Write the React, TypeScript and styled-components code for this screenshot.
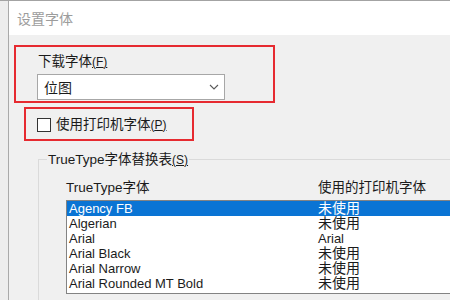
import React from "react";
import styled, { createGlobalStyle } from "styled-components";

const Global = createGlobalStyle`
  html, body { margin: 0; padding: 0; }
  body {
    width: 450px; height: 300px; overflow: hidden;
    background: #ececec;
    font-family: "Liberation Sans", "Noto Sans CJK SC", sans-serif;
    color: #1b1b1b;
  }
`;

const Frame = styled.div`
  display: flex;
  height: 299px;
  border-top: 1px solid #a3a3a3;
  overflow: hidden;
`;

const Gutter = styled.div`
  width: 8px;
  flex: none;
  background: #ededed;
`;

const Window = styled.div`
  flex: 1;
  min-width: 0;
  display: flex;
  flex-direction: column;
  border-left: 1px solid #a9a9a9;
  background: #f0f0f0;
  overflow: hidden;
`;

const TitleBar = styled.div`
  height: 34px;
  flex: none;
  background: #ffffff;
  display: flex;
  align-items: center;
  padding-left: 8px;
  font-size: 14px;
  color: #9c9c9c;
`;

const Content = styled.div`
  flex: 1;
  display: flex;
  flex-direction: column;
  align-items: flex-start;
  padding: 10px 0 0 5px;
`;

const Highlight = styled.div<{ $w: number; $h: number; $ml: number; $mt: number }>`
  box-sizing: border-box;
  width: ${(p) => p.$w}px;
  height: ${(p) => p.$h}px;
  margin-left: ${(p) => p.$ml}px;
  margin-top: ${(p) => p.$mt}px;
  border: 2px solid #e62a30;
  flex: none;
`;

const DownloadBox = styled(Highlight)`
  display: flex;
  flex-direction: column;
  padding: 7px 0 0 21px;
  gap: 4px;
`;

const Label = styled.div<{ $ml?: number }>`
  font-size: 13.5px;
  line-height: 16px;
  height: 16px;
  margin-left: ${(p) => p.$ml ?? 0}px;
  white-space: nowrap;
`;

const Key = styled.span`
  font-size: 12px;
  text-decoration: underline;
`;

const Select = styled.div`
  box-sizing: border-box;
  width: 188px;
  height: 26px;
  background: #ffffff;
  border: 1px solid #a7a7a7;
  display: flex;
  align-items: center;
  justify-content: space-between;
  padding: 0 5px 0 6px;
  font-size: 14px;
`;

const CheckBox = styled(Highlight)`
  display: flex;
  align-items: center;
  gap: 5px;
  padding: 2px 0 0 11px;
`;

const Box = styled.span`
  box-sizing: border-box;
  width: 14px;
  height: 14px;
  border: 1px solid #333333;
  background: #ffffff;
  flex: none;
`;

const Group = styled.div`
  align-self: stretch;
  margin: 18px 0 0 24px;
  border-top: 1px solid #dadada;
  border-left: 1px solid #dadada;
  flex: 1;
  display: flex;
  flex-direction: column;
`;

const Legend = styled.div`
  align-self: flex-start;
  margin: -8px 0 0 8px;
  padding: 0 1px;
  background: #f0f0f0;
  font-size: 13.5px;
  line-height: 16px;
  white-space: nowrap;
`;

const Columns = styled.div`
  display: grid;
  grid-template-columns: 252px 1fr;
  margin: 12px 0 0 27px;
  font-size: 13.5px;
  line-height: 16px;
  white-space: nowrap;
`;

const List = styled.div`
  box-sizing: border-box;
  margin: 4px 0 0 27px;
  width: 420px;
  height: 94px;
  border: 1px solid #838383;
  background: #ffffff;
  flex: none;
`;

const Row = styled.div<{ $sel?: boolean }>`
  display: grid;
  grid-template-columns: 251px 1fr;
  height: 15px;
  align-items: center;
  background: ${(p) => (p.$sel ? "#0a74d4" : "transparent")};
  color: ${(p) => (p.$sel ? "#ffffff" : "#1b1b1b")};
  white-space: nowrap;
`;

const Cell = styled.span<{ $cjk?: boolean; $pad?: number }>`
  font-size: ${(p) => (p.$cjk ? 14 : 13)}px;
  line-height: 15px;
  padding-left: ${(p) => p.$pad ?? 0}px;
`;

const rows: [string, string][] = [
  ["Agency FB", "未使用"],
  ["Algerian", "未使用"],
  ["Arial", "Arial"],
  ["Arial Black", "未使用"],
  ["Arial Narrow", "未使用"],
  ["Arial Rounded MT Bold", "未使用"],
];

const Chevron = () => (
  <svg width="10" height="6" viewBox="0 0 10 6">
    <path d="M1 1 L5 5 L9 1" fill="none" stroke="#5a5a5a" strokeWidth="1.1" />
  </svg>
);

export default function App() {
  return (
    <>
      <Global />
      <Frame>
        <Gutter />
        <Window>
          <TitleBar>设置字体</TitleBar>
          <Content>
            <DownloadBox $w={261} $h={58} $ml={0} $mt={0}>
              <Label $ml={1}>
                下载字体<Key>(<u>F</u>)</Key>
              </Label>
              <Select>
                <span>位图</span>
                <Chevron />
              </Select>
            </DownloadBox>
            <CheckBox $w={170} $h={34} $ml={10} $mt={4}>
              <Box />
              <Label>
                使用打印机字体<Key>(<u>P</u>)</Key>
              </Label>
            </CheckBox>
            <Group>
              <Legend>
                TrueType字体替换表<Key>(<u>S</u>)</Key>
              </Legend>
              <Columns>
                <span>TrueType字体</span>
                <span>使用的打印机字体</span>
              </Columns>
              <List>
                {rows.map(([a, b], i) => (
                  <Row key={a} $sel={i === 0}>
                    <Cell $pad={2}>{a}</Cell>
                    <Cell $cjk={b !== "Arial"}>{b}</Cell>
                  </Row>
                ))}
              </List>
            </Group>
          </Content>
        </Window>
      </Frame>
    </>
  );
}
